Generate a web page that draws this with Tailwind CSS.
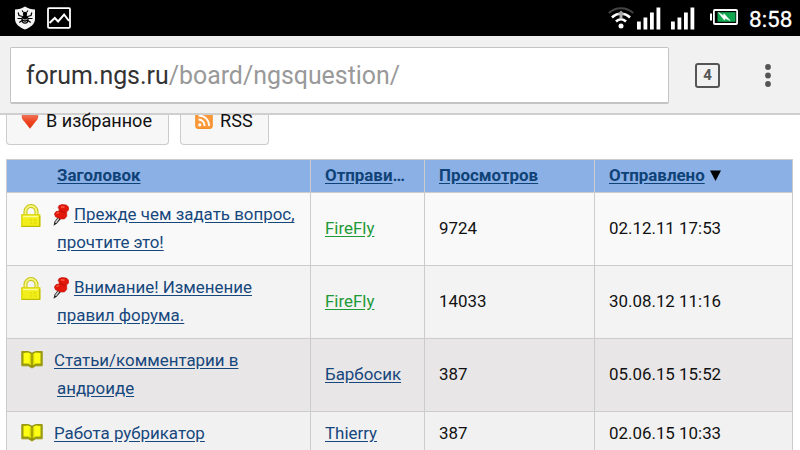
<!DOCTYPE html>
<html lang="ru">
<head>
  <meta charset="UTF-8">
  <meta name="viewport" content="width=device-width, initial-scale=1.0">
  <title>forum.ngs.ru</title>
  <script src="https://cdn.jsdelivr.net/npm/@tailwindcss/browser@4"></script>
</head>
<body class="w-[800px] h-[450px] overflow-hidden bg-white text-[#111] font-['Roboto',sans-serif] text-[16.900px]">

  <!-- icons used more than once -->
  <svg class="hidden">
    <symbol id="lock" viewBox="0 0 20 24">
      <path d="M4.500 11V7.500a5.500 5.500 0 0 1 11 0V11" fill="none" stroke="#c4c21a" stroke-width="4"/>
      <path d="M4.500 11V7.500a5.500 5.500 0 0 1 11 0V11" fill="none" stroke="#f6f67a" stroke-width="2"/>
      <rect x=".8" y="10.800" width="18" height="11.600" fill="#f2ee1c" stroke="#d8d400" stroke-width="1.200"/>
      <path d="M2 12.500h15" stroke="#fbfb9a" stroke-width="1.400"/>
      <path d="M9 16h2M12.500 16h3M9 19h2M12.500 19h3" stroke="#dcd600" stroke-width="1"/>
      <path d="M.8 22.400h18V12" fill="none" stroke="#bdb700" stroke-width="1"/>
    </symbol>
    <symbol id="pin" viewBox="0 0 16 22">
      <path d="M.5 21.800L1.500 17.500l3.500-4.500 3 1.800-4.300 5z" fill="#222"/>
      <path d="M2.500 18.800l3.400-4.600" stroke="#ccc" stroke-width="1.500"/>
      <path d="M6 1.500L9 .5l4.500.6L15.700 3.300l-.3 3-1.800 1.500.2 4.500-2.400 2.700-4-.1-5-2.200-1-2.900 1.600-2.200 3.200-.6L6 5 5.200 3.500z" fill="#e3170a" stroke="#b80e05" stroke-width=".6"/>
      <path d="M8 2.800l3.500.4M3.500 9.500l2.500-1" stroke="#ff6a5a" stroke-width="1.200"/>
      <path d="M7 6l4 2.500 1.500-.5" fill="none" stroke="#a80d04" stroke-width=".8"/>
    </symbol>
    <symbol id="book" viewBox="0 0 22 19">
      <path d="M.8 1.500h6.700L11 3.200l3.500-1.700h6.700v14.300h-6.500L11 18l-3.700-2.200H.8z" fill="#9a9a10" stroke="#9a9a10" stroke-width="1"/>
      <path d="M2.500 3l4.800-.6 3.200 2v10.800l-3.200-1.600H2.500zM19.500 3l-4.800-.6-3.200 2v10.800l3.200-1.600h4.800z" fill="#ffff14"/>
      <path d="M9.300 4.500v10M12.700 4.500v10" stroke="#d2d200" stroke-width="1.200"/>
      <path d="M11 3.500V17" stroke="#8a8a00" stroke-width="1.200"/>
    </symbol>
    <symbol id="signal" viewBox="0 0 24 23">
      <path d="M0 14.500h3.800v8H0zM6.500 10.500h3.800v12H6.500zM13 5.500h3.800v17H13zM19.500.5h3.800v22h-3.800z" fill="#fff"/>
    </symbol>
  </svg>

  <!-- status bar -->
  <div class="h-[36px] bg-black flex items-center text-white">
    <svg class="ml-[14px] -mt-[1px] w-[22px] h-[24px]" viewBox="0 0 22 24">
      <path d="M11 .5c3 2 6.500 3 10 3V13c0 5-4.500 8.500-10 10.500C5.500 21.500 1 18 1 13V3.500c3.500 0 7-1 10-3z" fill="#f4f4f4"/>
      <ellipse cx="11" cy="13.500" rx="3.600" ry="4.300"/>
      <circle cx="11" cy="8" r="2.200"/>
      <path d="M8.500 10.500L5 9.500 4.200 6.500M13.500 10.500L17 9.500l.8-3M8 12.500H3.500M14 12.500h4.500M8 14.500L5.300 16.500M14 14.500l2.700 2M9.500 6.500L8 4.500M12.500 6.500L14 4.500" fill="none" stroke="#000" stroke-width="1.200"/>
      <path d="M8.500 13l2.500 1 2.500-1M9 15.500l2 .8 2-.8" fill="none" stroke="#ddd" stroke-width=".8"/>
    </svg>
    <svg class="ml-[11px] -mt-[1px] w-[24px] h-[22px]" viewBox="0 0 24 22">
      <rect x="1" y="1.200" width="22" height="19.600" rx="1" fill="none" stroke="#fff" stroke-width="1.800"/>
      <path d="M2.500 16l5.300-5 3.300 3.500 6-7L22 14" fill="none" stroke="#fff" stroke-width="2"/>
    </svg>
    <svg class="ml-[537px] w-[26px] h-[24px]" viewBox="0 0 26 24">
      <path d="M.8 7C7.500.5 18.500.5 25.200 7" fill="none" stroke="#444" stroke-width="2"/>
      <path d="M4 11.500c5-5 13-5 18 0" fill="none" stroke="#fff" stroke-width="2.600"/>
      <path d="M8 15.500c3-3 7-3 10 0" fill="none" stroke="#fff" stroke-width="2.600"/>
      <path d="M13 4.500l3.500 4h-2v4h-3v-4h-2z" fill="#aaa"/>
      <circle cx="13" cy="20" r="2.500" fill="#fff"/>
    </svg>
    <svg class="ml-[3px] w-[24px] h-[23px]"><use href="#signal"/></svg>
    <svg class="ml-[10px] w-[24px] h-[23px]"><use href="#signal"/></svg>
    <svg class="ml-[15px] mb-[3px] w-[28px] h-[16px]" viewBox="0 0 28 16">
      <path d="M0 4.500h2v7H0z" fill="#fff"/>
      <rect x="3.900" y="1" width="23.200" height="14" rx="1" fill="none" stroke="#fff" stroke-width="1.800"/>
      <path d="M7.500 3.200h18v9.600h-18z" fill="#12a650"/>
      <path d="M8.500 3.500l5 3.200.5-2 6 6.800-5-2.200-.5 2z" fill="#fff" stroke="#fff" stroke-width=".6"/>
    </svg>
    <span class="ml-[11px] text-[22.500px] leading-none mt-[2px] [-webkit-text-stroke:0.300px_white]">8:58</span>
  </div>

  <!-- browser toolbar -->
  <div class="h-[79px] bg-[#f1f1f1] border-b-2 border-[#cfcfcf] flex items-start pt-[11px]">
    <div class="ml-[10px] w-[659px] h-[57px] bg-white border border-b-2 border-[#c4c4c4] rounded-[2px] pl-[15px] pt-[2px] flex items-center text-[24.900px] text-[#333]">
      <span>forum.ngs.ru<span class="text-[#999]">/board/ngsquestion/</span></span>
    </div>
    <div class="ml-[26px] mt-[16px] size-[25px] border-2 border-[#555] rounded-[3px] flex items-center justify-center text-[15px] font-bold text-[#555]">4</div>
    <svg class="ml-[45px] mt-[17px] w-[6px] h-[23px]" viewBox="0 0 6 23" fill="#555">
      <circle cx="3" cy="3" r="2.900"/><circle cx="3" cy="11.500" r="2.900"/><circle cx="3" cy="20" r="2.900"/>
    </svg>
  </div>

  <!-- page buttons, scrolled partly under the toolbar -->
  <div class="h-[30px] flex gap-[11px] pl-[6px]">
    <div class="w-[163px] bg-[#f7f7f7] border border-t-0 border-[#ccc] rounded-b-[4px] flex items-start pl-[14px]">
      <svg class="w-[18px] h-[14px]" viewBox="0 0 18 14">
        <defs><linearGradient id="heart" x1="0" y1="0" x2="0" y2="1"><stop offset="0" stop-color="#ee7358"/><stop offset=".5" stop-color="#f0431f"/><stop offset="1" stop-color="#d8361b"/></linearGradient></defs>
        <path d="M.8 0h16.400c.5 3-.8 4.800-2.500 6.600L9 13.700 3.300 6.600C1.500 4.800.3 3 .8 0z" fill="url(#heart)"/>
      </svg>
      <span class="ml-[7px] -mt-[5px] leading-[22px] text-[18.100px] whitespace-nowrap">В избранное</span>
    </div>
    <div class="w-[89px] bg-[#f7f7f7] border border-t-0 border-[#ccc] rounded-b-[4px] flex items-start pl-[14px]">
      <svg class="w-[18px] h-[14px]" viewBox="0 3 18 14" fill="none">
        <rect x=".8" y="0" width="16.400" height="16.400" rx="2" fill="#fb9a3c" stroke="#f08a1e"/>
        <circle cx="4.800" cy="12.800" r="1.600" fill="#fff"/>
        <path d="M3.500 7.500a6 6 0 0 1 6 6.500M3.500 3.500a10 10 0 0 1 10.500 10.500" stroke="#fff" stroke-width="1.800"/>
      </svg>
      <span class="ml-[7px] -mt-[5px] leading-[22px] text-[18.100px]">RSS</span>
    </div>
  </div>

  <!-- topics -->
  <div class="mt-[14px] ml-[6px] w-[787px] border-l border-t border-[#ccc] leading-[28px] [&>div]:grid [&>div]:grid-cols-[304px_114px_170px_198px] [&>div>div]:border-r [&>div>div]:border-b [&>div>div]:border-[#ccc] [&>div>div]:flex [&>div>div]:items-center [&>div>div]:pl-[14px] [&>div>div]:pb-[2px] [&_a]:underline [&_a]:underline-offset-2">
    <div class="h-[33px] bg-[#8bb0e6] font-bold text-[#0f4377]">
      <div><a class="ml-[36px]">Заголовок</a></div>
      <div><a>Отправи</a>…</div>
      <div><a>Просмотров</a></div>
      <div><a>Отправлено</a>
        <svg class="ml-[5px] w-[11px] h-[11px]" viewBox="0 0 11 11"><path d="M0 .5h11L5.500 11z" fill="#000"/></svg>
      </div>
    </div>
    <div class="h-[73px] bg-[#f9f9f9]">
      <div>
        <svg class="w-[20px] h-[24px] -mt-[25px] shrink-0"><use href="#lock"/></svg>
        <div class="ml-[12px] text-[#16477d]">
          <div class="flex items-center"><svg class="w-[16px] h-[22px] mr-[5px] mt-[2px]"><use href="#pin"/></svg><a>Прежде чем задать вопрос,</a></div>
          <a class="ml-[4px] block">прочтите это!</a>
        </div>
      </div>
      <div><a class="text-[#1f9a38]">FireFly</a></div>
      <div>9724</div>
      <div>02.12.11 17:53</div>
    </div>
    <div class="h-[73px] bg-[#f3f3f3]">
      <div>
        <svg class="w-[20px] h-[24px] -mt-[25px] shrink-0"><use href="#lock"/></svg>
        <div class="ml-[12px] text-[#16477d]">
          <div class="flex items-center"><svg class="w-[16px] h-[22px] mr-[5px] mt-[2px]"><use href="#pin"/></svg><a>Внимание! Изменение</a></div>
          <a class="ml-[4px] block">правил форума.</a>
        </div>
      </div>
      <div><a class="text-[#1f9a38]">FireFly</a></div>
      <div>14033</div>
      <div>30.08.12 11:16</div>
    </div>
    <div class="h-[73px] bg-[#e8e6e6]">
      <div>
        <svg class="w-[22px] h-[19px] -mt-[29px] shrink-0"><use href="#book"/></svg>
        <div class="ml-[11px] text-[#16477d]">
          <a class="block">Статьи/комментарии в</a>
          <a class="ml-[3px] block">андроиде</a>
        </div>
      </div>
      <div><a class="text-[#16477d]">Барбосик</a></div>
      <div>387</div>
      <div>05.06.15 15:52</div>
    </div>
    <div class="h-[45px] bg-[#f1f1f1]">
      <div>
        <svg class="w-[22px] h-[19px] -mt-[1px] shrink-0"><use href="#book"/></svg>
        <a class="ml-[11px] text-[#16477d]">Работа рубрикатор</a>
      </div>
      <div><a class="text-[#16477d]">Thierry</a></div>
      <div>387</div>
      <div>02.06.15 10:33</div>
    </div>
  </div>
</body>
</html>
